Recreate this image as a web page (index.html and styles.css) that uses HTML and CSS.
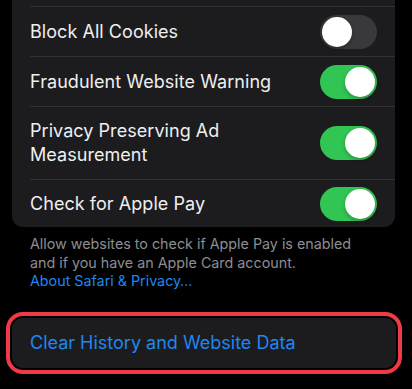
FILE: index.html
```html
<!DOCTYPE html>
<html>
<head>
<meta charset="utf-8">
<link rel="stylesheet" href="styles.css">
</head>
<body>
  <div class="screen">
    <div class="group">
      <div class="row first">
        <span class="label">Block All Cookies</span>
        <span class="toggle"><span class="knob"></span></span>
      </div>
      <div class="row">
        <span class="label">Fraudulent Website Warning</span>
        <span class="toggle on"><span class="knob"></span></span>
      </div>
      <div class="row tall">
        <span class="label">Privacy Preserving Ad<br>Measurement</span>
        <span class="toggle on"><span class="knob"></span></span>
      </div>
      <div class="row last">
        <span class="label">Check for Apple Pay</span>
        <span class="toggle on"><span class="knob"></span></span>
      </div>
    </div>
    <p class="footer">Allow websites to check if Apple Pay is enabled and if you have an Apple Card account.<br><span class="link">About Safari &amp; Privacy…</span></p>
    <div class="action">
      <span class="action-text">Clear History and Website Data</span>
    </div>
  </div>
</body>
</html>
```
FILE: styles.css
```css
html, body {
  margin: 0;
  padding: 0;
  background: #000;
}
.screen {
  width: 412px;
  height: 389px;
  overflow: hidden;
  font-family: Inter, "Noto Sans", sans-serif;
  -webkit-font-smoothing: antialiased;
}
.group {
  margin: 0 17px 0 12px;
  padding-top: 6px;
  background: #1c1c1e;
  border-radius: 0 0 11px 11px;
  display: flex;
  flex-direction: column;
}
.row {
  display: flex;
  align-items: center;
  justify-content: space-between;
  height: 50px;
  margin-left: 18px;
  padding-right: 18px;
  border-top: 1px solid #323234;
  box-sizing: border-box;
}
.row.tall {
  height: 73px;
}
.row.last {
  height: 48px;
}
.label {
  color: #efeff1;
  font-size: 18px;
  line-height: 24px;
  letter-spacing: 0.05px;
}
.toggle {
  width: 57px;
  height: 34px;
  border-radius: 17px;
  background: #39393d;
  box-sizing: border-box;
  padding: 2px;
  display: flex;
  justify-content: flex-start;
  flex-shrink: 0;
}
.toggle.on {
  background: #31c553;
  justify-content: flex-end;
}
.knob {
  width: 30px;
  height: 30px;
  border-radius: 50%;
  background: #fff;
  box-shadow: 0 2px 4px rgba(0,0,0,0.25);
}
.footer {
  margin: 0;
  padding: 8px 40px 0 30px;
  color: #8d8d93;
  font-size: 14.3px;
  line-height: 18.5px;
}
.link {
  color: #1f87f0;
}
.action {
  margin: 27px 16px 0 12px;
  height: 50px;
  background: #1c1c1e;
  border-radius: 11px;
  display: flex;
  align-items: center;
  padding-left: 18px;
  outline: 4px solid #ee3b47;
  outline-offset: 2px;
}
.action-text {
  color: #1f87f0;
  font-size: 18px;
}
```
